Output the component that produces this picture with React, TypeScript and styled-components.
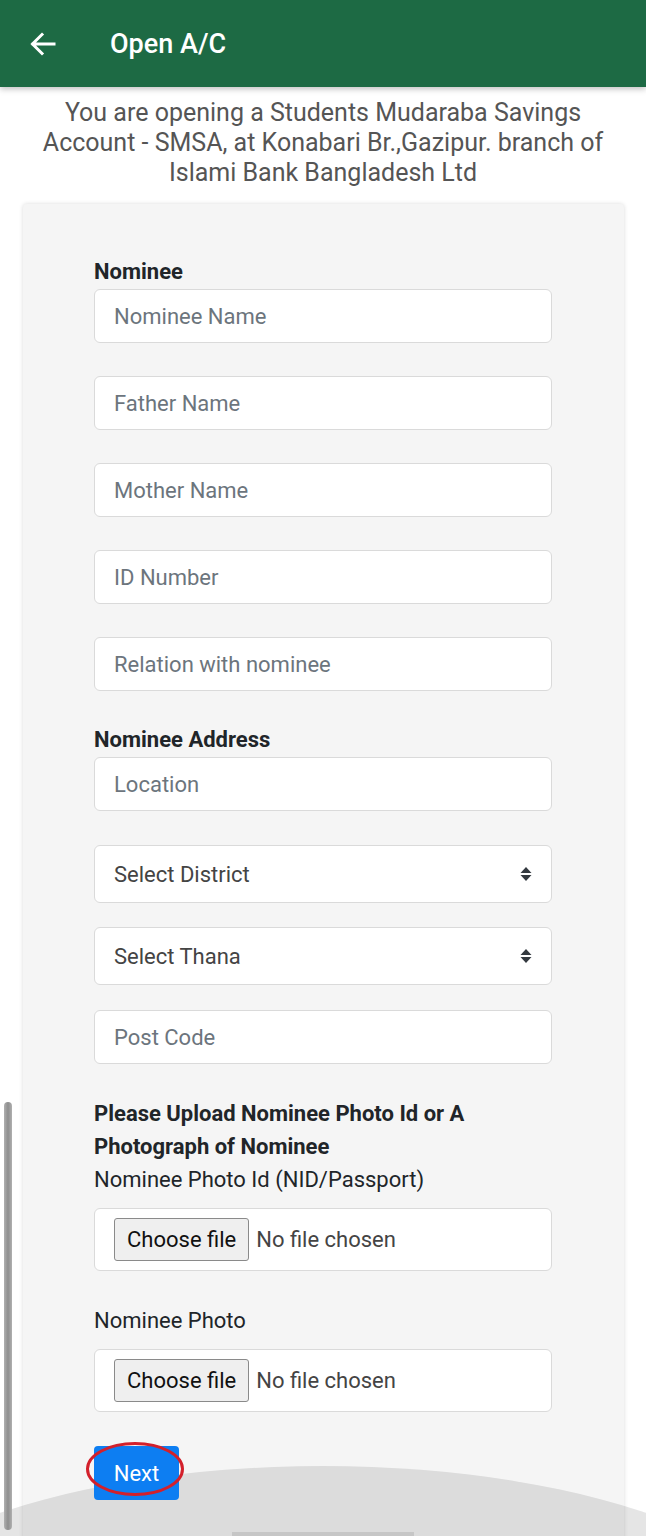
import React from 'react';
import styled, { createGlobalStyle } from 'styled-components';

const GlobalStyle = createGlobalStyle`
  html, body {
    margin: 0;
    padding: 0;
    background: #ffffff;
  }
  body {
    font-family: Roboto, 'Noto Sans', 'Liberation Sans', sans-serif;
  }
  * {
    box-sizing: border-box;
  }
`;

const Screen = styled.div`
  position: relative;
  width: 646px;
  height: 1536px;
  overflow: hidden;
  background: #ffffff;
`;

const Header = styled.header`
  display: flex;
  align-items: center;
  height: 87px;
  padding-left: 28px;
  background-color: #1d6a44;
  box-shadow: 0 2px 6px #00000040;
  position: relative;
  z-index: 2;
`;

const BackButton = styled.button`
  display: flex;
  align-items: center;
  justify-content: center;
  width: 30px;
  height: 30px;
  padding: 0;
  margin-right: 52px;
  border: none;
  background: transparent;
`;

const Title = styled.h1`
  margin: 0;
  color: #ffffff;
  font-size: 27px;
  font-weight: 500;
`;

const Intro = styled.p`
  margin: 11px 0 0;
  padding: 0 20px;
  text-align: center;
  color: #555555;
  font-size: 25px;
  line-height: 30px;
`;

const Card = styled.section`
  margin: 16px 22px 0 23px;
  padding: 52px 72px 80px 71px;
  min-height: 1400px;
  background-color: #f5f5f5;
  border-radius: 4px;
  box-shadow: 0 0 4px #00000026;
`;

const Label = styled.div`
  padding-top: 4px;
  margin-bottom: 5px;
  color: #212529;
  font-size: 22px;
  font-weight: 700;
  line-height: 24px;
`;

const Heading = styled.div`
  color: #212529;
  font-size: 22px;
  font-weight: 700;
  line-height: 33px;
`;

const Caption = styled.div`
  color: #212529;
  font-size: 22px;
  line-height: 33px;
`;

const Input = styled.input`
  display: block;
  width: 100%;
  height: 54px;
  margin: 0 0 33px;
  padding: 0 19px;
  background: #ffffff;
  border: 1px solid #dadada;
  border-radius: 6px;
  font-family: inherit;
  font-size: 22px;
  color: #212529;

  &::placeholder {
    color: #6c757d;
  }
`;

const SelectBox = styled.div<{ $last?: boolean }>`
  display: flex;
  align-items: center;
  justify-content: space-between;
  height: 58px;
  margin-bottom: ${(p) => (p.$last ? '25px' : '24px')};
  padding: 0 19px;
  background: #ffffff;
  border: 1px solid #dadada;
  border-radius: 6px;
  color: #444444;
  font-size: 22px;
`;

const FileBox = styled.div`
  display: flex;
  align-items: center;
  height: 63px;
  margin: 12px 0 33px;
  padding: 0 19px;
  background: #ffffff;
  border: 1px solid #dadada;
  border-radius: 6px;
`;

const ChooseButton = styled.span`
  display: inline-flex;
  align-items: center;
  height: 43px;
  padding: 0 12px;
  background: #efefef;
  border: 1px solid #8a8a8a;
  border-radius: 3px;
  color: #111111;
  font-size: 22px;
`;

const NoFile = styled.span`
  margin-left: 7px;
  color: #444444;
  font-size: 22px;
`;

const NextWrap = styled.div`
  position: relative;
  z-index: 3;
  display: inline-block;
  margin-top: 1px;
`;

const NextButton = styled.button`
  width: 85px;
  height: 54px;
  border: none;
  border-radius: 4px;
  background-color: #0d7ef2;
  color: #ffffff;
  font-family: inherit;
  font-size: 22px;
`;

const Circle = styled.svg`
  position: absolute;
  left: -9px;
  top: -5px;
  pointer-events: none;
`;

const BottomArc = styled.div`
  position: absolute;
  left: -180px;
  right: -180px;
  top: 1466px;
  height: 400px;
  border-radius: 50%;
  background: rgba(0, 0, 0, 0.1);
  z-index: 2;
`;

const HomeBar = styled.div`
  position: absolute;
  left: 232px;
  bottom: 0;
  width: 182px;
  height: 4px;
  background: #c6c6c6;
  z-index: 4;
`;

const ScrollBar = styled.div`
  position: absolute;
  left: 4px;
  top: 1102px;
  width: 8px;
  height: 428px;
  border-radius: 4px;
  background: linear-gradient(90deg, #b0b0b0, #8e8e8e, #b0b0b0);
  z-index: 4;
`;

const SortIcon = () => (
  <svg width="12" height="16" viewBox="0 0 12 16">
    <path d="M6 1 L11.5 7 H0.5 Z" fill="#343a40" />
    <path d="M6 15 L11.5 9 H0.5 Z" fill="#343a40" />
  </svg>
);

const Select = ({ text, last }: { text: string; last?: boolean }) => (
  <SelectBox $last={last}>
    <span>{text}</span>
    <SortIcon />
  </SelectBox>
);

const FileField = () => (
  <FileBox>
    <ChooseButton>Choose file</ChooseButton>
    <NoFile>No file chosen</NoFile>
  </FileBox>
);

export default function App() {
  return (
    <Screen>
      <GlobalStyle />
      <Header>
        <BackButton aria-label="Back">
          <svg width="28" height="28" viewBox="0 0 28 28">
            <path
              d="M25 14 H4 M13 4.5 L3.5 14 L13 23.5"
              stroke="#ffffff"
              strokeWidth="3"
              fill="none"
              strokeLinecap="square"
            />
          </svg>
        </BackButton>
        <Title>Open A/C</Title>
      </Header>
      <Intro>
        You are opening a Students Mudaraba Savings Account - SMSA, at Konabari Br.,Gazipur. branch
        of Islami Bank Bangladesh Ltd
      </Intro>
      <Card>
        <Label>Nominee</Label>
        <Input placeholder="Nominee Name" />
        <Input placeholder="Father Name" />
        <Input placeholder="Mother Name" />
        <Input placeholder="ID Number" />
        <Input placeholder="Relation with nominee" />

        <Label>Nominee Address</Label>
        <Input placeholder="Location" style={{ marginBottom: 34 }} />
        <Select text="Select District" />
        <Select text="Select Thana" last />
        <Input placeholder="Post Code" />

        <Heading>
          Please Upload Nominee Photo Id or A
          <br />
          Photograph of Nominee
        </Heading>
        <Caption>Nominee Photo Id (NID/Passport)</Caption>
        <FileField />
        <Caption>Nominee Photo</Caption>
        <FileField />

        <NextWrap>
          <NextButton>Next</NextButton>
          <Circle width="100" height="58" viewBox="0 0 100 58">
            <ellipse cx="50" cy="28" rx="47.5" ry="25.5" fill="none" stroke="#d3202b" strokeWidth="3" />
          </Circle>
        </NextWrap>
      </Card>
      <BottomArc />
      <ScrollBar />
      <HomeBar />
    </Screen>
  );
}
